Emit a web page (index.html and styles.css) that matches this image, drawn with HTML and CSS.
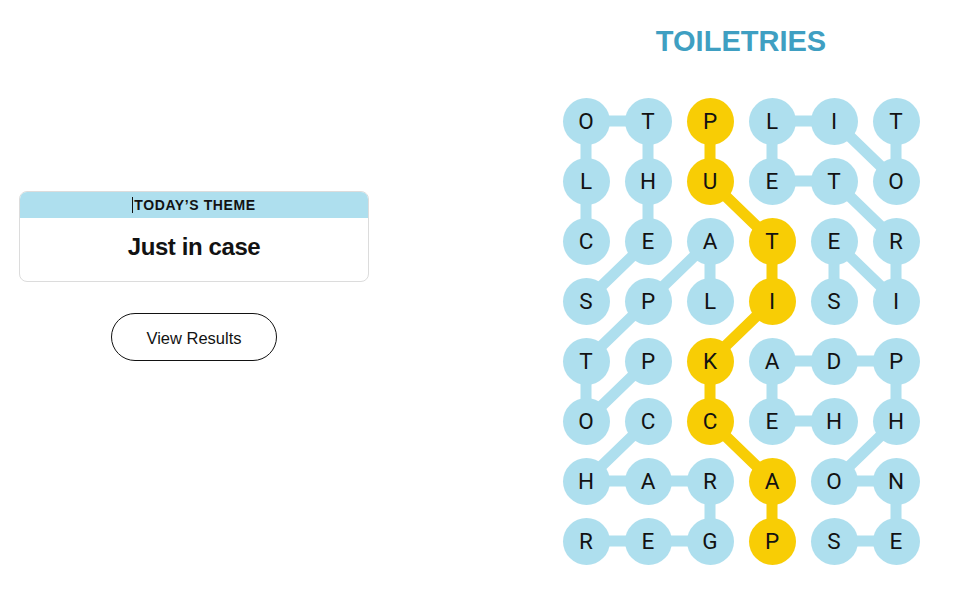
FILE: index.html
```html
<!DOCTYPE html>
<html lang="en">
<head>
<meta charset="utf-8">
<title>Strands</title>
<link rel="stylesheet" href="styles.css">
</head>
<body>
<main class="page">
  <section class="side">
    <div class="theme-card">
      <div class="theme-head"><span class="caret"></span>TODAY’S THEME</div>
      <div class="theme-body">Just in case</div>
    </div>
    <button class="results-btn" type="button">View Results</button>
  </section>
  <section class="board-area">
    <h1 class="found-word">TOILETRIES</h1>
    <div class="board">
      <svg class="links" width="356" height="466" viewBox="0 0 356 466" aria-hidden="true">
        <g stroke="#aedfee" stroke-width="11" stroke-linecap="round">
          <line x1="23" y1="23" x2="85" y2="23"/>
          <line x1="23" y1="23" x2="23" y2="83"/>
          <line x1="23" y1="83" x2="23" y2="143"/>
          <line x1="85" y1="23" x2="85" y2="83"/>
          <line x1="85" y1="83" x2="85" y2="143"/>
          <line x1="85" y1="143" x2="23" y2="203"/>
          <line x1="147" y1="143" x2="85" y2="203"/>
          <line x1="147" y1="143" x2="147" y2="203"/>
          <line x1="85" y1="203" x2="23" y2="263"/>
          <line x1="23" y1="263" x2="23" y2="323"/>
          <line x1="23" y1="323" x2="85" y2="263"/>
          <line x1="85" y1="323" x2="23" y2="383"/>
          <line x1="23" y1="383" x2="85" y2="383"/>
          <line x1="85" y1="383" x2="147" y2="383"/>
          <line x1="147" y1="383" x2="147" y2="443"/>
          <line x1="147" y1="443" x2="85" y2="443"/>
          <line x1="85" y1="443" x2="23" y2="443"/>
          <line x1="209" y1="23" x2="271" y2="23"/>
          <line x1="209" y1="23" x2="209" y2="83"/>
          <line x1="209" y1="83" x2="271" y2="83"/>
          <line x1="271" y1="23" x2="333" y2="83"/>
          <line x1="333" y1="23" x2="333" y2="83"/>
          <line x1="271" y1="83" x2="333" y2="143"/>
          <line x1="333" y1="143" x2="333" y2="203"/>
          <line x1="333" y1="203" x2="271" y2="143"/>
          <line x1="271" y1="143" x2="271" y2="203"/>
          <line x1="209" y1="263" x2="271" y2="263"/>
          <line x1="271" y1="263" x2="333" y2="263"/>
          <line x1="209" y1="263" x2="209" y2="323"/>
          <line x1="209" y1="323" x2="271" y2="323"/>
          <line x1="333" y1="263" x2="333" y2="323"/>
          <line x1="333" y1="323" x2="271" y2="383"/>
          <line x1="271" y1="383" x2="333" y2="383"/>
          <line x1="333" y1="383" x2="333" y2="443"/>
          <line x1="333" y1="443" x2="271" y2="443"/>
        </g>
        <g stroke="#f8cd05" stroke-width="11" stroke-linecap="round">
          <line x1="147" y1="23" x2="147" y2="83"/>
          <line x1="147" y1="83" x2="209" y2="143"/>
          <line x1="209" y1="143" x2="209" y2="203"/>
          <line x1="209" y1="203" x2="147" y2="263"/>
          <line x1="147" y1="263" x2="147" y2="323"/>
          <line x1="147" y1="323" x2="209" y2="383"/>
          <line x1="209" y1="383" x2="209" y2="443"/>
        </g>
      </svg>
      <div class="cell">O</div><div class="cell">T</div><div class="cell gold">P</div><div class="cell">L</div><div class="cell">I</div><div class="cell">T</div>
      <div class="cell">L</div><div class="cell">H</div><div class="cell gold">U</div><div class="cell">E</div><div class="cell">T</div><div class="cell">O</div>
      <div class="cell">C</div><div class="cell">E</div><div class="cell">A</div><div class="cell gold">T</div><div class="cell">E</div><div class="cell">R</div>
      <div class="cell">S</div><div class="cell">P</div><div class="cell">L</div><div class="cell gold">I</div><div class="cell">S</div><div class="cell">I</div>
      <div class="cell">T</div><div class="cell">P</div><div class="cell gold">K</div><div class="cell">A</div><div class="cell">D</div><div class="cell">P</div>
      <div class="cell">O</div><div class="cell">C</div><div class="cell gold">C</div><div class="cell">E</div><div class="cell">H</div><div class="cell">H</div>
      <div class="cell">H</div><div class="cell">A</div><div class="cell">R</div><div class="cell gold">A</div><div class="cell">O</div><div class="cell">N</div>
      <div class="cell">R</div><div class="cell">E</div><div class="cell">G</div><div class="cell gold">P</div><div class="cell">S</div><div class="cell">E</div>
    </div>
  </section>
</main>
</body>
</html>
```
FILE: styles.css
```css
* { box-sizing: border-box; }

html, body {
  margin: 0;
  padding: 0;
  background: #ffffff;
  color: #121212;
  font-family: "Liberation Sans", Arial, sans-serif;
}

.page {
  display: flex;
  align-items: flex-start;
  width: 958px;
  height: 616px;
}

.side {
  width: 388px;
  padding: 191px 19px 0 19px;
  display: flex;
  flex-direction: column;
  align-items: center;
}

.theme-card {
  width: 350px;
  border: 1px solid #dcdcdc;
  border-radius: 8px;
  overflow: hidden;
}

.theme-head {
  height: 26px;
  background: #aedfee;
  display: flex;
  align-items: center;
  justify-content: center;
  font-size: 14px;
  font-weight: 700;
  letter-spacing: 0.6px;
  color: #121212;
}

.caret {
  display: inline-block;
  width: 1px;
  height: 16px;
  background: #121212;
  margin-right: 1px;
}

.theme-body {
  padding: 15px 0 20px;
  text-align: center;
  font-size: 24px;
  line-height: 28px;
  font-weight: 700;
  letter-spacing: -0.4px;
  color: #121212;
}

.results-btn {
  margin-top: 31px;
  width: 166px;
  height: 48px;
  border: 1px solid #121212;
  border-radius: 24px;
  background: #ffffff;
  font-family: "Liberation Sans", Arial, sans-serif;
  font-size: 16.5px;
  color: #121212;
  padding: 3px 0 0;
}

.board-area {
  margin-left: 174px;
  width: 358px;
  padding-top: 24px;
  display: flex;
  flex-direction: column;
  align-items: center;
}

.found-word {
  margin: 0 0 40px;
  font-size: 29px;
  line-height: 34px;
  font-weight: 700;
  color: #3f9fc2;
}

.board {
  position: relative;
  display: grid;
  grid-template-columns: repeat(6, 46px);
  grid-auto-rows: 46px;
  column-gap: 16px;
  row-gap: 14px;
}

.links {
  position: absolute;
  left: 0;
  top: 0;
  z-index: 0;
}

.cell {
  position: relative;
  z-index: 1;
  width: 47px;
  height: 47px;
  margin: -0.5px;
  border-radius: 50%;
  background: #aedfee;
  display: flex;
  align-items: center;
  justify-content: center;
  font-family: Roboto, "Liberation Sans", sans-serif;
  font-size: 22.5px;
  color: #121212;
}

.cell.gold {
  background: #f8cd05;
}
```
